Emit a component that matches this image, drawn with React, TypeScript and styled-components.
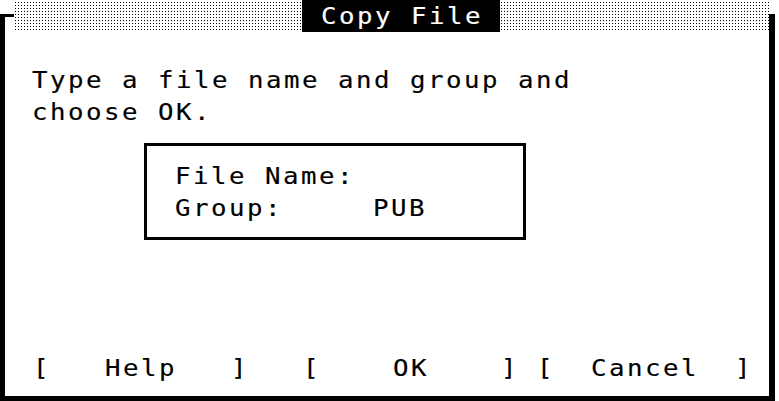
import React from "react";
import styled, { createGlobalStyle, css } from "styled-components";

const SCALE = 1.12;
const CELL = 18 / SCALE;

const Global = createGlobalStyle`
  html, body { margin: 0; padding: 0; background: #fff; }
  #root { width: 779px; height: 401px; }
`;

const stretched = css`
  transform: scaleX(${SCALE});
  transform-origin: 0 0;
`;

const Screen = styled.div`
  width: 779px;
  height: 401px;
  background: #fff;
  overflow: hidden;
  font-family: "DejaVu Sans Mono", "Liberation Mono", monospace;
  font-size: 23px;
  line-height: 32px;
  letter-spacing: ${CELL - 23 * 0.602}px;
  -webkit-text-stroke: 0.15px currentColor;
  color: #000;
  white-space: pre;
`;

const Window = styled.div`
  width: 775px;
  display: flex;
  flex-direction: column;
`;

const Header = styled.div`
  display: flex;
  height: 32px;
`;

const LeftCorner = styled.div`
  width: 9px;
  height: 15px;
  margin-top: 14px;
  border-top: 3px solid #000;
  border-left: 5px solid #000;
`;

const RightCorner = styled.div`
  width: 6px;
  height: 18px;
  margin-top: 14px;
  background: #000;
`;

const Dots = styled.div<{ $w: number }>`
  width: ${(p) => p.$w}px;
  height: 32px;
  background-image: conic-gradient(at 1px 1px, transparent 75%, #000 0);
  background-size: 3px 3px;
  background-position: 1px 2px;
`;

const Title = styled.div`
  width: 198px;
  height: 32px;
  box-sizing: border-box;
  padding-left: 19px;
  background: #000;
  color: #fff;
`;

const TitleText = styled.div`
  ${stretched}
`;

const Body = styled.div`
  height: 369px;
  box-sizing: border-box;
  border-left: 5px solid #000;
  border-right: 6px solid #000;
  border-bottom: 5px solid #000;
  padding-top: 32px;
  padding-bottom: 12px;
  display: flex;
  flex-direction: column;
`;

const Message = styled.div`
  margin-left: 27px;
  ${stretched}
`;

const Line = styled.div`
  height: 32px;
`;

const FieldBox = styled.div`
  margin-top: 15px;
  margin-left: 139px;
  width: 382px;
  box-sizing: border-box;
  border: 3px solid #000;
  padding: 14px 0 13px 27.5px;
`;

const FieldRows = styled.div`
  ${stretched}
`;

const FieldRow = styled.div`
  display: flex;
  height: 32px;
`;

const FieldLabel = styled.span`
  width: ${11 * CELL}px;
`;

const Buttons = styled.div`
  margin-top: auto;
  margin-left: 27.5px;
  display: flex;
  height: 32px;
  ${stretched}
`;

const Button = styled.span<{ $gap: number }>`
  margin-right: ${(p) => p.$gap * CELL}px;
`;

export default function App() {
  return (
    <>
      <Global />
      <Screen>
        <Window>
          <Header>
            <LeftCorner />
            <Dots $w={288} />
            <Title>
              <TitleText>Copy File</TitleText>
            </Title>
            <Dots $w={269} />
            <RightCorner />
          </Header>
          <Body>
            <Message>
              <Line>Type a file name and group and</Line>
              <Line>choose OK.</Line>
            </Message>
            <FieldBox>
              <FieldRows>
                <FieldRow>
                  <FieldLabel>File Name:</FieldLabel>
                </FieldRow>
                <FieldRow>
                  <FieldLabel>Group:</FieldLabel>
                  <span>PUB</span>
                </FieldRow>
              </FieldRows>
            </FieldBox>
            <Buttons>
              <Button $gap={3}>{"[   Help   ]"}</Button>
              <Button $gap={1}>{"[    OK    ]"}</Button>
              <Button $gap={0}>{"[  Cancel  ]"}</Button>
            </Buttons>
          </Body>
        </Window>
      </Screen>
    </>
  );
}
